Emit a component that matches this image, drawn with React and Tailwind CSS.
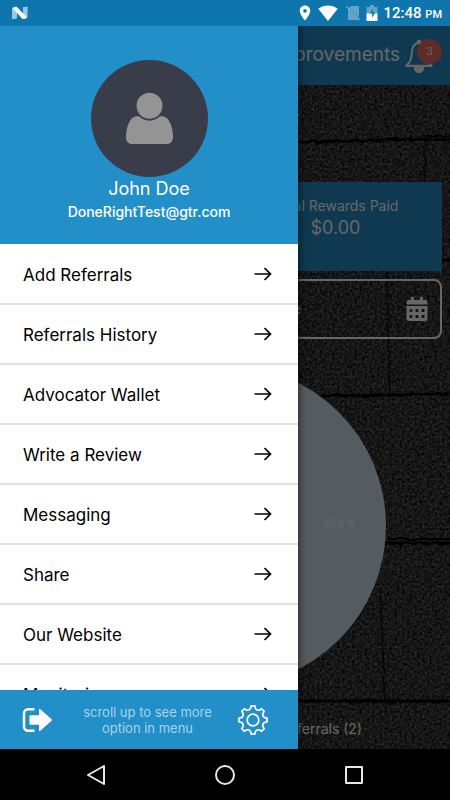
import React from 'react';
import { MdLocationOn, MdSignalWifi4Bar } from 'react-icons/md';
import { FaCalendarAlt } from 'react-icons/fa';

const menuItems = [
    'Add Referrals',
    'Referrals History',
    'Advocator Wallet',
    'Write a Review',
    'Messaging',
    'Share',
    'Our Website',
    'Monitoring',
];

// Outline of the gear: eight flat teeth joined by round valleys, in a 32x32 box
function gearPath() {
    const teeth = 8;
    const point = (degrees, radius) => {
        const a = degrees * (Math.PI / 180);
        return `${(16 + radius * Math.sin(a)).toFixed(2)} ${(16 - radius * Math.cos(a)).toFixed(2)}`;
    };
    let path = `M${point(-7.5, 14.2)}`;
    for (let i = 0; i < teeth; i++) {
        const angle = (i * 360) / teeth;
        path += `L${point(angle + 7.5, 14.2)}L${point(angle + 10, 12.6)}`;
        path += `A3.3 3.3 0 0 0 ${point(angle + 35, 12.6)}L${point(angle + 37.5, 14.2)}`;
    }
    return `${path}Z`;
}

function GearIcon() {
    return (
        <svg viewBox="0 0 32 32" className="size-8" fill="none" stroke="currentColor" strokeWidth="1.7" strokeLinejoin="round">
            <path d={gearPath()} />
            <circle cx="16" cy="16" r="5.8" />
        </svg>
    );
}

function LogoutIcon() {
    return (
        <svg viewBox="0 0 32 28" className="h-7 w-8" fill="currentColor">
            <path d="M14.5 3.2H8.2A4.2 4.2 0 0 0 4 7.4v13.2a4.2 4.2 0 0 0 4.2 4.2h6.3" fill="none" stroke="currentColor" strokeWidth="2.4" />
            <path d="M10.5 9.2H19V3.8q0-1.6 1.3-.6l11 9.9q1 .9 0 1.8l-11 9.9q-1.3 1-1.3-.6V18.8h-8.5q-1 0-1-1v-7.6q0-1 1-1Z" />
        </svg>
    );
}

function ArrowIcon() {
    return (
        <svg viewBox="0 0 20 16" className="h-4 w-5" fill="none" stroke="currentColor" strokeWidth="1.7">
            <path d="M1.5 8h16M11.5 2l6 6-6 6" />
        </svg>
    );
}

function BellIcon() {
    return (
        <svg viewBox="0 0 32 36" className="h-[34px] w-[30px]" fill="none" stroke="currentColor" strokeWidth="2.2" strokeLinejoin="round">
            <path d="M16 3.5c-5 1.2-7.5 5.5-7.7 10.5-.2 7-1.3 10-5.8 14.5h27c-4.5-4.5-5.6-7.500-5.800-14.500C23.500 9 21 4.700 16 3.500Z" />
            <circle cx="16" cy="3" r="1.5" fill="currentColor" />
            <path d="M11.5 30.5a4.5 4.5 0 0 0 9 0Z" fill="currentColor" />
        </svg>
    );
}

function UserIcon() {
    return (
        <svg viewBox="0 0 50 54" className="h-[53px] w-[49px]" fill="currentColor">
            <circle cx="25" cy="14" r="13.2" />
            <path d="M14.5 25c3 2.8 6.5 4.2 10.5 4.2S32.5 27.8 35.5 25c3.5-.8 7.5.8 9.8 5 2.5 4.5 3.7 10 3.700 15.500 0 5-2.500 7.500-7 7.500H8c-4.500 0-7-2.500-7-7.500C1 40 2.200 34.500 4.700 30c2.300-4.200 6.300-5.800 9.800-5Z" />
        </svg>
    );
}

function NougatLogo() {
    return (
        <svg viewBox="0 0 16 14" className="h-3.5 w-4" fill="currentColor">
            <path d="M0 2.2 5 1v11.5L0 13.2ZM11 1.2 15.5.5v11L11 12.5Z" opacity=".6" />
            <path d="M1 1.5Q3 .5 5 1l10 10.5Q13 13.5 10.5 13L1 2.5Z" />
        </svg>
    );
}

function NoSimIcon() {
    return (
        <svg viewBox="0 0 14 16" className="h-4 w-3.5">
            <path d="M5 1h7q1 0 1 1v10.5L3 3ZM2 4.5 12.5 15H3q-1 0-1-1Z" fill="currentColor" opacity=".35" />
            <path d="M.5 1.5 13.5 15" stroke="currentColor" strokeWidth="1.2" opacity=".45" />
        </svg>
    );
}

function BatteryIcon() {
    return (
        <svg viewBox="0 0 12 16" className="h-4 w-3">
            <path d="M4 0h4v2h3q.5 0 .5.5V9H.5V2.5Q.5 2 1 2h3Z" fill="currentColor" opacity=".35" />
            <path d="M.5 8.5h11v7q0 .5-.5.5H1q-.5 0-.5-.5Z" fill="currentColor" />
            <path d="M7 3.5 4 8.5h2.2V13l3-5.5H7Z" fill="#0e76ad" />
        </svg>
    );
}

function ShingleTexture() {
    return (
        <svg viewBox="0 0 450 723" preserveAspectRatio="xMaxYMin slice" className="absolute inset-0 size-full">
            <filter id="grain" x="0" y="0" width="100%" height="100%" colorInterpolationFilters="sRGB">
                <feTurbulence type="fractalNoise" baseFrequency="0.4" numOctaves="3" seed="4" />
                <feColorMatrix values="0.6 0 0 0 -0.08  0.6 0 0 0 -0.08  0.6 0 0 0 -0.08  0 0 0 0 1" />
            </filter>
            <filter id="rough" colorInterpolationFilters="sRGB">
                <feTurbulence type="fractalNoise" baseFrequency="0.12" numOctaves="2" />
                <feDisplacementMap in="SourceGraphic" scale="4" xChannelSelector="R" yChannelSelector="G" />
            </filter>
            <rect width="450" height="723" filter="url(#grain)" />
            <g stroke="#000" fill="none" filter="url(#rough)">
                <path d="M0 117 300 116 423 113 450 114M0 234H450M0 370 330 370 450 368M0 517H450M0 675H450" strokeWidth="3" />
                <path d="M423 110H450M387 513H450" strokeWidth="2" />
                <path d="M425 113V156M387 246 390 368M380 560 385 676" strokeWidth="2" strokeOpacity=".6" />
            </g>
        </svg>
    );
}

function StatusBar() {
    return (
        <div className="flex h-[26px] shrink-0 items-center justify-between bg-[#0e76ad] pr-2 pl-3 text-white">
            <NougatLogo />
            <div className="flex items-center gap-1">
                <MdLocationOn className="size-[18px]" />
                <MdSignalWifi4Bar className="size-5" />
                <div className="flex items-center gap-1.5 pl-1">
                    <NoSimIcon />
                    <BatteryIcon />
                    <span className="font-[Roboto] text-[15px] font-medium">
                        12:48 <span className="text-[11px]">PM</span>
                    </span>
                </div>
            </div>
        </div>
    );
}

function RewardCard({ label, value }) {
    return (
        <div className="col-start-2 h-[89px] bg-[#238fc8] pt-3 text-center whitespace-nowrap">
            <p className="text-sm leading-6">{label}</p>
            <p className="text-lg leading-5">{value}</p>
        </div>
    );
}

function Dashboard() {
    return (
        <main className="relative flex h-full flex-col overflow-hidden text-white">
            <ShingleTexture />
            <header className="relative flex h-[59px] shrink-0 items-center justify-end gap-1 bg-[#238fc8] pr-4 whitespace-nowrap">
                <h1 className="text-[19px]">Improvements</h1>
                <button type="button" aria-label="Notifications" className="relative">
                    <BellIcon />
                    <span className="absolute top-0 -right-2 flex size-[25px] items-center justify-center rounded-full bg-[#ee6e69] text-[10px]">3</span>
                </button>
            </header>
            <h2 className="relative h-[97px] shrink-0 pt-4 text-center text-lg">- My Dashboard -</h2>
            <section className="relative grid shrink-0 grid-cols-2 gap-2 px-2">
                <RewardCard label="Total Rewards Paid" value="$0.00" />
            </section>
            <button type="button" className="relative mx-2 mt-2 flex h-[60px] shrink-0 items-center justify-end gap-[105px] rounded-lg border-2 border-white pr-3 text-sm">
                Select Date
                <FaCalendarAlt className="h-6 w-[22px]" />
            </button>
            <svg viewBox="0 0 322 322" className="relative mx-auto mt-[26px] size-[322px] shrink-0">
                <circle cx="161" cy="161" r="161" fill="#d5e6f2" />
                <text x="275" y="162" textAnchor="middle" className="fill-white font-[Roboto] text-[11px]">50.0 %</text>
            </svg>
            <div className="relative mt-auto flex justify-end pr-[88px] pb-2.5 text-sm whitespace-nowrap">
                <span>Referrals (2)</span>
            </div>
        </main>
    );
}

function Drawer() {
    return (
        <aside className="absolute inset-y-0 left-0 flex w-[298px] flex-col bg-white shadow-[1px_0_8px_rgba(0,0,0,0.6)]">
            <div className="flex h-[218px] shrink-0 flex-col items-center bg-[#238fc8] pt-[34px] text-white">
                <div className="flex size-[117px] items-center justify-center rounded-full bg-[#393d49] text-[#949494]">
                    <UserIcon />
                </div>
                <p className="text-lg leading-6">John Doe</p>
                <p className="text-sm leading-[22px] font-medium">DoneRightTest@gtr.com</p>
            </div>
            <nav className="min-h-0 flex-1 overflow-hidden pt-px">
                {menuItems.map(item => (
                    <a key={item} href="#" className="flex h-[60px] items-center justify-between border-b-2 border-[#e2e2e2] pr-[25px] pl-[23px] text-[17px] text-black">
                        <span className="pt-1">{item}</span>
                        <ArrowIcon />
                    </a>
                ))}
            </nav>
            <footer className="flex h-[59px] shrink-0 items-center justify-between bg-[#238fc8] pr-[29px] pl-5 text-white">
                <button type="button" aria-label="Log out"><LogoutIcon /></button>
                <p className="pl-1.5 text-center text-[13px] leading-4 text-[#a7d3ec]">
                    scroll up to see more<br />option in menu
                </p>
                <button type="button" aria-label="Settings"><GearIcon /></button>
            </footer>
        </aside>
    );
}

function NavigationBar() {
    return (
        <div className="flex h-[51px] shrink-0 items-center justify-between bg-black px-[84px] text-[#e6e6e6]">
            <button type="button" aria-label="Back">
                <svg viewBox="0 0 24 24" className="size-6" fill="none" stroke="currentColor" strokeWidth="2" strokeLinejoin="round">
                    <path d="M20 3v18L4 12Z" />
                </svg>
            </button>
            <button type="button" aria-label="Home">
                <svg viewBox="0 0 24 24" className="size-6" fill="none" stroke="currentColor" strokeWidth="2">
                    <circle cx="12" cy="12" r="9" />
                </svg>
            </button>
            <button type="button" aria-label="Recent apps">
                <svg viewBox="0 0 24 24" className="size-6" fill="none" stroke="currentColor" strokeWidth="2" strokeLinejoin="round">
                    <path d="M4 4h16v16H4Z" />
                </svg>
            </button>
        </div>
    );
}

export default function App() {
    return (
        <div className="flex h-screen flex-col overflow-hidden bg-black font-[Inter,sans-serif]">
            <StatusBar />
            <div className="relative min-h-0 flex-1 overflow-hidden">
                <Dashboard />
                <div className="absolute inset-0 bg-black/60" />
                <Drawer />
            </div>
            <NavigationBar />
        </div>
    );
}
